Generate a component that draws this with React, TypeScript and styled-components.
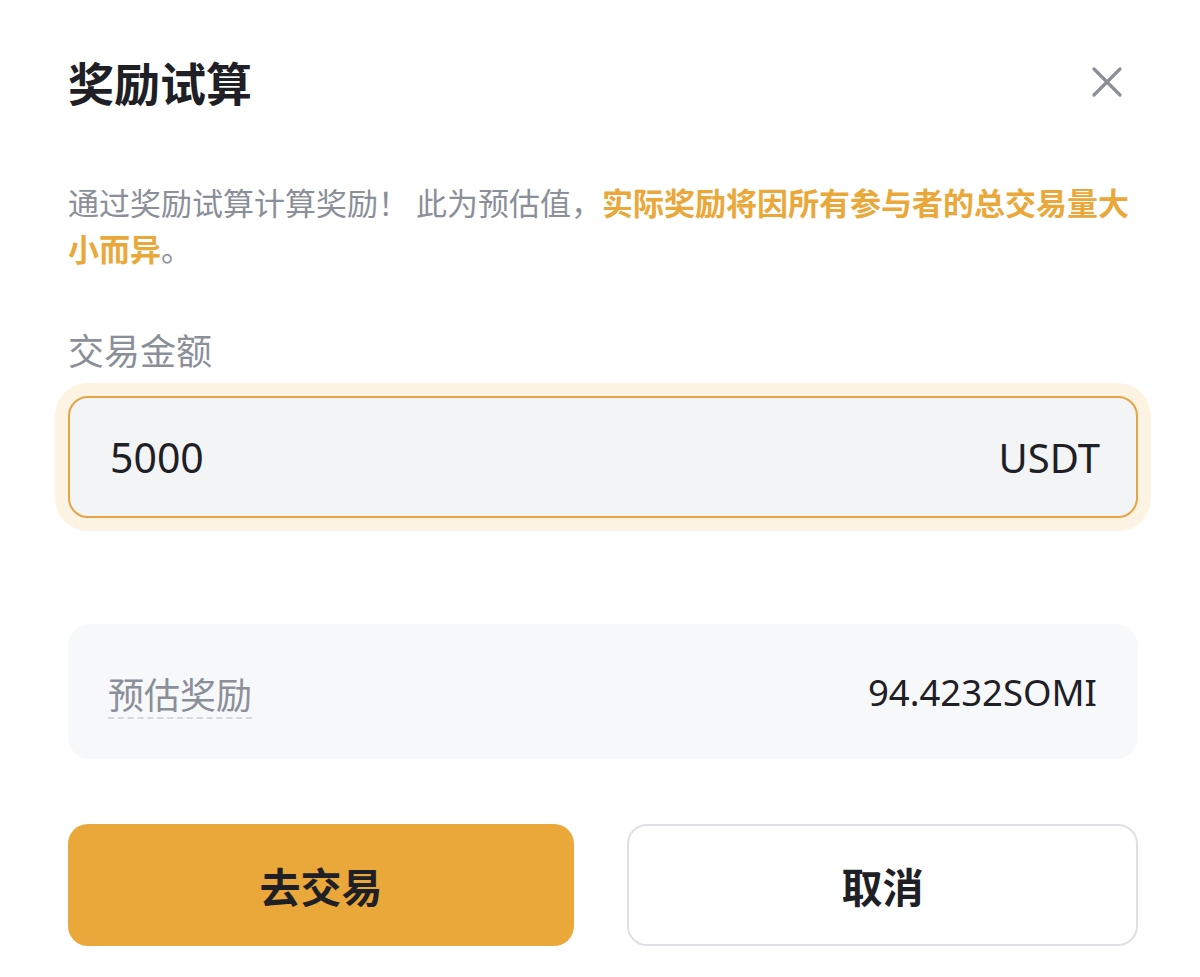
import React from "react";
import styled, { createGlobalStyle } from "styled-components";

const Global = createGlobalStyle`
  html, body { margin: 0; padding: 0; background: #ffffff; }
  body { font-family: "Noto Sans", "Noto Sans CJK SC", sans-serif; }
  * { box-sizing: border-box; }
`;

const Dialog = styled.div`
  width: 1200px;
  padding: 53px 62px 0 68px;
  display: flex;
  flex-direction: column;
`;

const Header = styled.div`
  display: flex;
  align-items: center;
  justify-content: space-between;
  height: 56px;
`;

const Title = styled.h1`
  margin: 0;
  font-family: "Noto Sans CJK SC", sans-serif;
  font-size: 46px;
  line-height: 56px;
  font-weight: 700;
  color: #1e2026;
`;

const CloseButton = styled.button`
  border: none;
  background: none;
  padding: 0;
  width: 40px;
  height: 40px;
  margin-right: 11px;
  margin-top: 2px;
  display: flex;
  align-items: center;
  justify-content: center;
  cursor: pointer;
`;

const Description = styled.p`
  margin: 70px 0 0;
  font-family: "Noto Sans CJK SC", sans-serif;
  font-size: 31px;
  line-height: 46px;
  color: #8a8f99;
`;

const Highlight = styled.span`
  color: #eaa83a;
  font-weight: 700;
`;

const FieldLabel = styled.div`
  margin-top: 54px;
  font-family: "Noto Sans CJK SC", sans-serif;
  font-size: 36px;
  line-height: 48px;
  color: #8a8f99;
`;

const InputBox = styled.div`
  margin-top: 23px;
  height: 122px;
  border: 2px solid #e6a445;
  border-radius: 20px;
  background: #f3f4f6;
  box-shadow: 0 0 0 13px #fdf3e2;
  display: flex;
  align-items: center;
  justify-content: space-between;
  padding: 0 36px 0 40px;
`;

const AmountInput = styled.input`
  border: none;
  outline: none;
  background: transparent;
  font-family: "Noto Sans", sans-serif;
  font-size: 41px;
  color: #1e2026;
  width: 600px;
  padding: 0;
`;

const Unit = styled.span`
  font-family: "Noto Sans", sans-serif;
  font-size: 40px;
  color: #1e2026;
`;

const RewardBox = styled.div`
  margin-top: 106px;
  height: 135px;
  border-radius: 22px;
  background: #f7f8fa;
  display: flex;
  align-items: center;
  justify-content: space-between;
  padding: 0 41px 0 40px;
`;

const RewardLabel = styled.span`
  font-family: "Noto Sans CJK SC", sans-serif;
  font-size: 36px;
  line-height: 44px;
  color: #8a8f99;
  border-bottom: 2px dashed #d5d8de;
  padding-bottom: 2px;
  margin-top: 6px;
`;

const RewardValue = styled.span`
  font-family: "Noto Sans", sans-serif;
  font-size: 36.5px;
  color: #1e2026;
`;

const Actions = styled.div`
  margin-top: 65px;
  display: grid;
  grid-template-columns: 506px 511px;
  justify-content: space-between;
`;

const ActionButton = styled.button<{ $primary?: boolean }>`
  height: 122px;
  border-radius: 20px;
  font-family: "Noto Sans CJK SC", sans-serif;
  font-size: 41px;
  font-weight: 700;
  color: #1e2026;
  cursor: pointer;
  background: ${(p) => (p.$primary ? "#eaa83a" : "#ffffff")};
  border: ${(p) => (p.$primary ? "none" : "2px solid #dfe0e6")};
`;

export default function App() {
  return (
    <>
      <Global />
      <Dialog>
        <Header>
          <Title>奖励试算</Title>
          <CloseButton aria-label="关闭">
            <svg width="32" height="32" viewBox="0 0 32 32">
              <path
                d="M3 3 L29 29 M29 3 L3 29"
                stroke="#8a8e97"
                strokeWidth="3.2"
                strokeLinecap="round"
              />
            </svg>
          </CloseButton>
        </Header>
        <Description>
          通过奖励试算计算奖励！ 此为预估值，
          <Highlight>实际奖励将因所有参与者的总交易量大</Highlight>
          <Highlight>小而异</Highlight>。
        </Description>
        <FieldLabel>交易金额</FieldLabel>
        <InputBox>
          <AmountInput defaultValue="5000" />
          <Unit>USDT</Unit>
        </InputBox>
        <RewardBox>
          <RewardLabel>预估奖励</RewardLabel>
          <RewardValue>94.4232SOMI</RewardValue>
        </RewardBox>
        <Actions>
          <ActionButton $primary>去交易</ActionButton>
          <ActionButton>取消</ActionButton>
        </Actions>
      </Dialog>
    </>
  );
}
